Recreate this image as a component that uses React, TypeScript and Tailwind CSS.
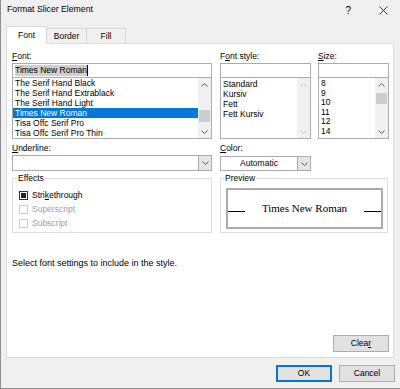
import { ReactNode } from 'react';

const fontList = [
  'The Serif Hand Black',
  'The Serif Hand Extrablack',
  'The Serif Hand Light',
  'Times New Roman',
  'Tisa Offc Serif Pro',
  'Tisa Offc Serif Pro Thin',
];
const styleList = ['Standard', 'Kursiv', 'Fett', 'Fett Kursiv'];
const sizeList = ['8', '9', '10', '11', '12', '14'];

const Chevron = ({ up, muted }: { up?: boolean; muted?: boolean }) => (
  <svg width="7" height="4" viewBox="0 0 7 4" className="block">
    <polyline
      points={up ? '0.5,3.5 3.5,0.5 6.5,3.5' : '0.5,0.5 3.5,3.5 6.5,0.5'}
      fill="none"
      stroke={muted ? '#c4c4c4' : '#5a5a5a'}
      strokeWidth="1"
    />
  </svg>
);

const ScrollBar = ({ thumb, disabled }: { thumb?: string; disabled?: boolean }) => (
  <div className="w-[13px] h-full flex flex-col bg-[#f0f0f0]">
    <div className="h-[13px] flex items-center justify-center">
      <Chevron up muted={disabled} />
    </div>
    <div className="flex-1 px-px">{thumb && <div className={`bg-[#cdcdcd] ${thumb}`} />}</div>
    <div className="h-[13px] flex items-center justify-center">
      <Chevron muted={disabled} />
    </div>
  </div>
);

const Label = ({ children }: { children: ReactNode }) => (
  <div className="h-[14px] leading-[14px]">{children}</div>
);

const Acc = ({ children }: { children: ReactNode }) => (
  <span className="underline underline-offset-[1px]">{children}</span>
);

const Check = ({ label, state }: { label: ReactNode; state: 'mixed' | 'off' }) => (
  <div className="h-[14px] flex items-center gap-[4px]">
    {state === 'mixed' ? (
      <div className="w-[9px] h-[9px] border border-[#333] flex items-center justify-center">
        <div className="w-[5px] h-[5px] bg-[#222]" />
      </div>
    ) : (
      <div className="w-[9px] h-[9px] border border-[#cccccc]" />
    )}
    <span className={state === 'off' ? 'text-[#a0a0a0]' : ''}>{label}</span>
  </div>
);

const Button = ({ children, primary }: { children: ReactNode; primary?: boolean }) => (
  <div
    className={`w-[56px] h-[17px] bg-[#e1e1e1] flex items-center justify-center ${
      primary ? 'border-2 border-[#0078d7]' : 'border border-[#adadad]'
    }`}
  >
    {children}
  </div>
);

export default function App() {
  return (
    <div className="w-[400px] h-[389px] bg-[#f0f0f0] border-l border-b border-[#8c8c8c] flex flex-col text-[8.5px] text-black font-['Segoe_UI','Liberation_Sans',Arial,sans-serif] overflow-hidden">
      {/* title bar */}
      <div className="h-[20px] flex items-center pl-[6px]">
        <span className="text-[8.7px]">Format Slicer Element</span>
        <span className="ml-auto text-[10px] mr-[28px]">?</span>
        <svg width="9" height="9" viewBox="0 0 9 9" className="mr-[12px]">
          <path d="M0.5 0.5 L8.5 8.5 M8.5 0.5 L0.5 8.5" stroke="#222" strokeWidth="0.9" />
        </svg>
      </div>

      {/* tabs */}
      <div className="mt-[6px] h-[17px] flex items-end pl-[5px]">
        <div className="w-[41px] h-[18px] -mb-px relative z-10 bg-white border border-[#d9d9d9] border-b-0 flex items-center justify-center">
          Font
        </div>
        <div className="w-[40px] h-[15px] border border-l-0 border-b-0 border-[#d9d9d9] flex items-center justify-center">
          Border
        </div>
        <div className="w-[39px] h-[15px] border border-l-0 border-b-0 border-[#d9d9d9] flex items-center justify-center">
          Fill
        </div>
      </div>

      {/* panel */}
      <div className="ml-[5px] w-[388px] h-[315px] bg-white border border-[#d9d9d9] flex flex-col pl-[5px] pr-[4px] pt-[5px] pb-[5px]">
        <div className="flex">
          <div className="w-[200px]">
            <Label>
              <Acc>F</Acc>ont:
            </Label>
            <div className="h-[15px] border border-[#ababab] flex items-center pl-[2px]">
              <span className="bg-[#cfcfcf] leading-[11px]">Times New Roman</span>
              <span className="w-px h-[11px] bg-black" />
            </div>
            <div className="h-[61px] border border-t-0 border-[#ababab] flex">
              <div className="flex-1 flex flex-col">
                {fontList.map((f) => (
                  <div
                    key={f}
                    className={`h-[10px] leading-[10px] pl-[2px] ${
                      f === 'Times New Roman' ? 'bg-[#0078d7] text-white' : ''
                    }`}
                  >
                    {f}
                  </div>
                ))}
              </div>
              <ScrollBar thumb="mt-[19px] h-[12px]" />
            </div>
          </div>

          <div className="w-[91px] ml-[8px]">
            <Label>
              F<Acc>o</Acc>nt style:
            </Label>
            <div className="h-[15px] border border-[#ababab]" />
            <div className="h-[61px] border border-t-0 border-[#ababab] flex">
              <div className="flex-1 flex flex-col pt-px">
                {styleList.map((s) => (
                  <div key={s} className="h-[10px] leading-[10px] pl-[2px]">
                    {s}
                  </div>
                ))}
              </div>
              <ScrollBar disabled />
            </div>
          </div>

          <div className="w-[71px] ml-[7px]">
            <Label>
              <Acc>S</Acc>ize:
            </Label>
            <div className="h-[15px] border border-[#ababab]" />
            <div className="h-[61px] border border-t-0 border-[#ababab] flex">
              <div className="flex-1 flex flex-col pt-px">
                {sizeList.map((s) => (
                  <div key={s} className="h-[9.6px] leading-[9.6px] pl-[2px]">
                    {s}
                  </div>
                ))}
              </div>
              <ScrollBar thumb="mt-[2px] h-[11px]" />
            </div>
          </div>
        </div>

        {/* underline / color */}
        <div className="flex mt-[2px]">
          <div className="w-[200px]">
            <Label>
              <Acc>U</Acc>nderline:
            </Label>
            <div className="h-[16px] border border-[#ababab] flex justify-end">
              <div className="w-[13px] h-full bg-[#e5e5e5] border-l border-[#ababab] flex items-center justify-center">
                <Chevron />
              </div>
            </div>
          </div>
          <div className="w-[91px] ml-[8px]">
            <Label>
              <Acc>C</Acc>olor:
            </Label>
            <div className="h-[15px] mt-px border border-[#ababab] flex">
              <div className="flex-1 flex items-center justify-center">Automatic</div>
              <div className="w-[13px] h-full bg-[#e5e5e5] border-l border-[#ababab] flex items-center justify-center">
                <Chevron />
              </div>
            </div>
          </div>
        </div>

        {/* group boxes */}
        <div className="flex mt-[2px]">
          <fieldset className="w-[200px] h-[60px] border border-[#dcdcdc]">
            <legend className="ml-[4px] px-px leading-[10px]">Effects</legend>
            <div className="flex flex-col pt-[5px] pl-[6px]">
              <Check
                state="mixed"
                label={
                  <>
                    Stri<Acc>k</Acc>ethrough
                  </>
                }
              />
              <Check state="off" label="Superscript" />
              <Check state="off" label="Subscript" />
            </div>
          </fieldset>
          <fieldset className="w-[168px] ml-[8px] h-[60px] border border-[#dcdcdc]">
            <legend className="ml-[3px] px-px leading-[10px]">Preview</legend>
            <div className="ml-[5px] mt-[5px] w-[157px] h-[41px] border-2 border-[#acacac] flex items-center">
              <div className="w-full flex items-baseline">
                <span className="w-[17px] border-b border-black" />
                <span className="flex-1 text-center text-[11px] leading-none font-['Liberation_Serif','Times_New_Roman',serif]">
                  Times New Roman
                </span>
                <span className="w-[17px] border-b border-black" />
              </div>
            </div>
          </fieldset>
        </div>

        <div className="mt-[25px] h-[10px] leading-[10px] text-[9px]">Select font settings to include in the style.</div>

        <div className="mt-auto flex justify-end">
          <Button>
            Clea<Acc>r</Acc>
          </Button>
        </div>
      </div>

      {/* dialog buttons */}
      <div className="mt-[7px] flex justify-end gap-[7px] pr-[5px]">
        <Button primary>OK</Button>
        <Button>Cancel</Button>
      </div>
    </div>
  );
}
